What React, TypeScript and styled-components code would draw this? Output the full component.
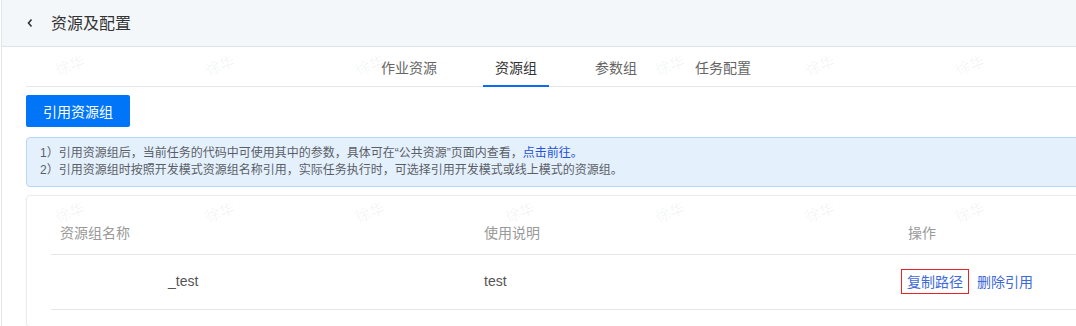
import React from 'react'
import styled, { createGlobalStyle } from 'styled-components'

const GlobalStyle = createGlobalStyle`
  html, body {
    margin: 0;
    padding: 0;
    background: #fff;
    overflow: hidden;
  }
  body {
    font-family: 'Liberation Sans', 'Noto Sans CJK SC', sans-serif;
    color: #333;
  }
`

const TABS = ['作业资源', '资源组', '参数组', '任务配置']
const WATERMARK_COLS = 7
const WATERMARK_ROWS = 2

const App = () => {
  return (
    <Page>
      <GlobalStyle />
      <Header>
        <BackIcon viewBox="0 0 10 10">
          <path d="M6.5 1.5 L3.5 5 L6.5 8.5" />
        </BackIcon>
        <Title>资源及配置</Title>
      </Header>

      <Content>
        <TabBar>
          {TABS.map((t) => (
            <Tab key={t} active={t === '资源组'}>
              {t}
            </Tab>
          ))}
        </TabBar>

        <PrimaryButton>引用资源组</PrimaryButton>

        <Notice>
          <div>
            1）引用资源组后，当前任务的代码中可使用其中的参数，具体可在“公共资源”页面内查看，
            <NoticeLink>点击前往。</NoticeLink>
          </div>
          <div>2）引用资源组时按照开发模式资源组名称引用，实际任务执行时，可选择引用开发模式或线上模式的资源组。</div>
        </Notice>

        <Card>
          <Table>
            <HeadCell>资源组名称</HeadCell>
            <HeadCell>使用说明</HeadCell>
            <HeadCell>操作</HeadCell>

            <BodyCell>
              <NameText>_test</NameText>
            </BodyCell>
            <BodyCell>test</BodyCell>
            <BodyCell>
              <ActionLink marked>复制路径</ActionLink>
              <ActionLink>删除引用</ActionLink>
            </BodyCell>
          </Table>
        </Card>
      </Content>

      <Watermarks>
        {Array.from({ length: WATERMARK_COLS * WATERMARK_ROWS }).map((_, i) => (
          <Mark key={i}>徐华</Mark>
        ))}
      </Watermarks>
    </Page>
  )
}

export default App

const Page = styled.div`
  position: relative;
  width: 1130px;
  height: 326px;
  margin-left: 1px;
  border-left: 1px solid #e2e4e8;
  overflow: hidden;
`

const Header = styled.div`
  height: 46px;
  display: flex;
  align-items: center;
  padding-left: 23px;
  background: #f4f7fa;
  border-bottom: 1px solid #dfe2e6;
`

const BackIcon = styled.svg`
  width: 10px;
  height: 10px;
  margin-right: 16px;
  fill: none;
  stroke: #333;
  stroke-width: 1.6;
`

const Title = styled.div`
  font-size: 16px;
  line-height: 22px;
  color: #333;
  padding-top: 1px;
`

const Content = styled.div`
  padding: 0 0 0 24px;
  display: flex;
  flex-direction: column;
`

const TabBar = styled.div`
  height: 39px;
  display: flex;
  justify-content: center;
  align-items: stretch;
  gap: 34px;
  border-bottom: 1px solid #e4e7ed;
  padding-right: 26px;
`

const Tab = styled.div<{ active?: boolean }>`
  display: flex;
  align-items: center;
  padding: 2px 12px 0;
  font-size: 14px;
  color: ${(p) => (p.active ? '#333' : '#666')};
  border-bottom: 2px solid ${(p) => (p.active ? '#0a6cf5' : 'transparent')};
  margin-bottom: -1px;
`

const PrimaryButton = styled.button`
  align-self: flex-start;
  margin-top: 8px;
  width: 104px;
  height: 32px;
  border: none;
  border-radius: 2px;
  background: #0075f7;
  color: #fff;
  font-family: inherit;
  font-size: 14px;
  padding: 0;
`

const Notice = styled.div`
  margin-top: 10px;
  padding: 7px 13px;
  background: #e5f0fd;
  border: 1px solid #b7d6f8;
  border-radius: 4px;
  font-size: 12px;
  line-height: 17px;
  color: #5a5f66;
`

const NoticeLink = styled.span`
  color: #2352d8;
`

const Card = styled.div`
  margin-top: 8px;
  padding: 19px 0 16px 24px;
  border: 1px solid #ebebeb;
  border-radius: 4px;
  box-shadow: 0 1px 3px rgba(0, 0, 0, 0.05);
`

const Table = styled.div`
  display: grid;
  grid-template-columns: 424px 424px 1fr;
`

const HeadCell = styled.div`
  display: flex;
  align-items: center;
  padding: 0 9px 6px;
  box-sizing: border-box;
  height: 40px;
  font-size: 14px;
  color: #999;
  border-bottom: 1px solid #e6e6e8;
`

const BodyCell = styled.div`
  height: 55px;
  box-sizing: border-box;
  display: flex;
  align-items: center;
  gap: 9px;
  padding: 0 9px 2px;
  font-size: 14px;
  color: #555;
  border-bottom: 1px solid #e6e6e8;
`

const NameText = styled.span`
  padding-left: 108px;
`

const ActionLink = styled.span<{ marked?: boolean }>`
  color: #3d6ad8;
  font-size: 14px;
  line-height: 18px;
  padding: 3px 5px 2px 5px;
  margin-left: -7px;
  border: 1px solid ${(p) => (p.marked ? '#e8222a' : 'transparent')};
`

const Watermarks = styled.div`
  position: absolute;
  inset: 0;
  pointer-events: none;
  display: grid;
  grid-template-columns: repeat(${WATERMARK_COLS}, 150px);
  grid-auto-rows: 147px;
  padding: 56px 0 0 53px;
`

const Mark = styled.div`
  width: 34px;
  height: 18px;
  font-size: 15px;
  line-height: 18px;
  color: rgba(0, 0, 0, 0.06);
  transform: rotate(-20deg);
  white-space: nowrap;
`
